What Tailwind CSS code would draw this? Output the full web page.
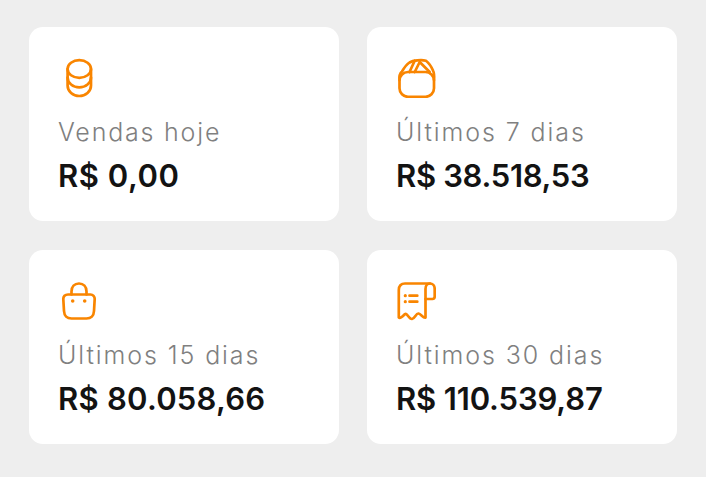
<!DOCTYPE html>
<html><head><meta charset="utf-8"><script src="https://cdn.jsdelivr.net/npm/@tailwindcss/browser@4"></script></head>
<body class="m-0">
<div class="w-[706px] h-[477px] bg-[#eeeeee] overflow-hidden pt-[27px] pl-[29px] font-['Inter',sans-serif]">
<div class="grid grid-cols-[310px_310px] grid-rows-[193.5px_193.5px] gap-x-[28px] gap-y-[29.5px]">

<div class="bg-white rounded-[14px] pl-[29px] pt-[31px]">
<svg class="block" width="40" height="40" viewBox="0 0 40 40" fill="none" stroke="#F98500" stroke-width="2.7" stroke-linecap="round" stroke-linejoin="round"><ellipse cx="21.3" cy="11" rx="11.7" ry="8.8"/><path d="M9.6 11V27.5C9.6 33.5 15 38 21.3 38S33 33.5 33 27.5V11"/><path d="M9.6 19.5C9.6 25 15 29.3 21.3 29.3S33 25 33 19.5"/></svg>
<div class="text-[25px] leading-[28px] font-light tracking-[1.8px] text-[#808080] mt-[20px]">Vendas hoje</div>
<div class="text-[31px] leading-[36px] font-semibold tracking-[0.55px] text-[#131313] mt-[12px]">R$ 0,00</div>
</div>

<div class="bg-white rounded-[14px] pl-[29px] pt-[31px]">
<svg class="block" width="40" height="40" viewBox="0 0 40 40" fill="none" stroke="#F98500" stroke-width="2.7" stroke-linecap="round" stroke-linejoin="round"><rect x="3.5" y="14" width="34.5" height="24.8" rx="8.5"/><path d="M3.5 22C3 18 3.8 15.5 6 13.5C8 10 10.5 6.5 13.5 4.5C17 2.5 25 1.5 30 2.7C33 5 35.5 9 37 12.5C38.2 15 38.3 19 38 22"/><path d="M13.5 14L18.7 2.7M18.7 14L23.7 4L33.7 14"/></svg>
<div class="text-[25px] leading-[28px] font-light tracking-[1.9px] text-[#808080] mt-[20px]">Últimos 7 dias</div>
<div class="text-[31px] leading-[36px] font-semibold tracking-[-0.33px] text-[#131313] mt-[12px]">R$ 38.518,53</div>
</div>

<div class="bg-white rounded-[14px] pl-[29px] pt-[31px]">
<svg class="block" width="40" height="40" viewBox="0 0 40 40" fill="none" stroke="#F98500" stroke-width="2.7" stroke-linecap="round" stroke-linejoin="round"><path d="M10 13.5H32.5C35 13.5 36.8 15.5 36.7 18L36 30C35.8 34.5 33 37.5 28.5 37.5H13.5C9 37.5 6.2 34.5 6 30L5.3 18C5.2 15.5 7 13.5 10 13.5Z"/><path d="M13.5 13.5V10.5C13.5 5.5 16.5 2.5 21 2.5S28.5 5.5 28.5 10.5V13.5"/><circle cx="14.7" cy="20" r="1.8" fill="#F98500" stroke="none"/><circle cx="26.7" cy="20" r="1.8" fill="#F98500" stroke="none"/></svg>
<div class="text-[25px] leading-[28px] font-light tracking-[1.9px] text-[#808080] mt-[20px]">Últimos 15 dias</div>
<div class="text-[31px] leading-[36px] font-semibold tracking-[0.25px] text-[#131313] mt-[12px]">R$ 80.058,66</div>
</div>

<div class="bg-white rounded-[14px] pl-[29px] pt-[31px]">
<svg class="block" width="40" height="40" viewBox="0 0 40 40" fill="none" stroke="#F98500" stroke-width="2.7" stroke-linecap="round" stroke-linejoin="round"><path d="M29.5 18V8C29.5 4.5 31.5 2.5 34 2.5S38.7 4.5 38.7 8V15.5C38.7 17 38 18 36.5 18H29.5"/><path d="M34 2.5H9C5 2.5 2.8 5 2.8 9V36.5C4.5 38 7 35 9 33C11 31.5 13 38.5 16 38C19 37.5 20 32 22.5 32.5C25 33 27.5 37.5 29.5 36.5V18"/><path d="M13.5 14.7H21.3M13.5 20.7H21.3"/><circle cx="9.3" cy="14.7" r="1.6" fill="#F98500" stroke="none"/><circle cx="9.3" cy="20.7" r="1.6" fill="#F98500" stroke="none"/></svg>
<div class="text-[25px] leading-[28px] font-light tracking-[1.9px] text-[#808080] mt-[20px]">Últimos 30 dias</div>
<div class="text-[31px] leading-[36px] font-semibold tracking-[-0.15px] text-[#131313] mt-[12px]">R$ 110.539,87</div>
</div>

</div>
</div>
</body></html>
